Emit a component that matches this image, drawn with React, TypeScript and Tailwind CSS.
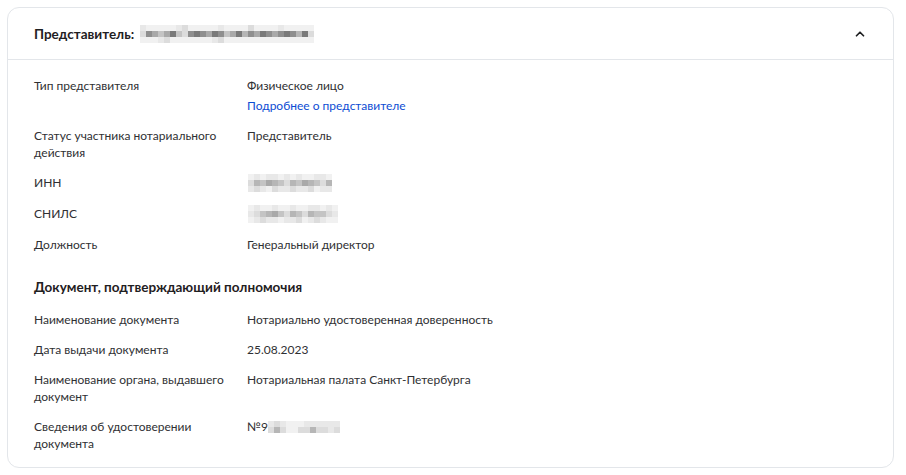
import { ChevronUp } from 'lucide-react';

// deterministic "mosaic" used in place of hidden personal data
const SHADES = ['#f1f1f1', '#dcdcdc', '#c4c4c4', '#a9a9a9', '#8f8f8f', '#7a7a7a', '#e8e8e8', '#b6b6b6'];

function Mosaic({ rows, cell = 6, h = 6 }: { rows: number[][]; cell?: number; h?: number }) {
  return (
    <div className="flex flex-col">
      {rows.map((row, i) => (
        <div key={i} className="flex">
          {row.map((v, j) => (
            <span key={j} style={{ width: cell, height: h, background: SHADES[v] }} />
          ))}
        </div>
      ))}
    </div>
  );
}

const NAME_ROWS = [
  [6, 0, 0, 0, 0, 0, 6, 1, 0, 0, 0, 0, 0, 6, 0, 0, 0, 0, 1, 0, 0, 0, 0, 6, 0, 0, 0, 0, 0],
  [1, 4, 3, 2, 3, 5, 2, 1, 4, 5, 4, 3, 5, 4, 2, 3, 5, 7, 4, 3, 5, 4, 3, 4, 5, 4, 7, 5, 1],
  [0, 0, 0, 6, 1, 0, 0, 0, 0, 0, 0, 0, 6, 1, 0, 0, 0, 0, 0, 0, 0, 0, 0, 0, 0, 0, 0, 0, 0],
];

const INN_ROWS = [
  [0, 6, 0, 6, 6, 0, 6, 0, 6, 0, 0, 6, 6, 0],
  [1, 7, 2, 3, 7, 2, 1, 7, 2, 3, 7, 2, 1, 7],
  [6, 1, 6, 0, 1, 6, 6, 1, 6, 6, 1, 0, 6, 6],
];

const SNILS_ROWS = [
  [0, 6, 0, 0, 6, 0, 0, 6, 0, 0, 6, 6, 0, 6, 0],
  [6, 1, 2, 7, 3, 2, 1, 7, 2, 1, 7, 2, 2, 1, 6],
  [0, 6, 1, 6, 6, 0, 6, 6, 1, 0, 6, 1, 6, 0, 0],
];

const CERT_ROWS = [
  [6, 1, 6, 0, 0, 0, 6, 6, 6, 6, 6, 6],
  [1, 7, 1, 0, 0, 1, 1, 7, 1, 1, 6, 1],
];

function Row({ label, children }: { label: React.ReactNode; children: React.ReactNode }) {
  return (
    <div className="grid grid-cols-[213px_1fr] leading-[17px]">
      <div className="text-[#2f3033] pr-2">{label}</div>
      <div className="text-[#2f3033]">{children}</div>
    </div>
  );
}

export default function App() {
  return (
    <div className="bg-white w-[906px] h-[475px] pt-[7px] pl-[7px] pr-[12px] font-['Lato','Inter',sans-serif] text-[12px] antialiased">
      <div className="border border-[#e3e6ea] rounded-[12px] bg-white">
        {/* header */}
        <div className="h-[52px] flex items-center justify-between pl-[26px] pr-[26px] border-b border-[#e3e6ea]">
          <div className="flex items-center gap-[6px] pt-[1px]">
            <span className="text-[13.5px] font-bold text-[#1f2022]">Представитель:</span>
            <Mosaic rows={NAME_ROWS} />
          </div>
          <ChevronUp size={14} strokeWidth={3} className="text-[#1f2022]" />
        </div>

        {/* body */}
        <div className="pl-[26px] pr-[26px] pt-[17px] pb-[15px] flex flex-col gap-[13px]">
          <Row label="Тип представителя">
            <div>Физическое лицо</div>
            <div className="mt-[3px] text-[#0d4cd3]">Подробнее о представителе</div>
          </Row>
          <Row label={<>Статус участника нотариального<br />действия</>}>Представитель</Row>
          <Row label="ИНН">
            <div className="pl-[1px]">
              <Mosaic rows={INN_ROWS} cell={6} />
            </div>
          </Row>
          <Row label="СНИЛС">
            <div className="pl-[1px]">
              <Mosaic rows={SNILS_ROWS} cell={6} />
            </div>
          </Row>
          <Row label="Должность">Генеральный директор</Row>

          <div className="mt-[12px] mb-[2px] text-[13.5px] font-bold text-[#1f2022] leading-[18px]">
            Документ, подтверждающий полномочия
          </div>

          <Row label="Наименование документа">Нотариально удостоверенная доверенность</Row>
          <Row label="Дата выдачи документа">25.08.2023</Row>
          <Row label={<>Наименование органа, выдавшего<br />документ</>}>
            Нотариальная палата Санкт-Петербурга
          </Row>
          <Row label={<>Сведения об удостоверении<br />документа</>}>
            <div className="flex items-center">
              <span>№9</span>
              <Mosaic rows={CERT_ROWS} cell={6} />
            </div>
          </Row>
        </div>
      </div>
    </div>
  );
}
